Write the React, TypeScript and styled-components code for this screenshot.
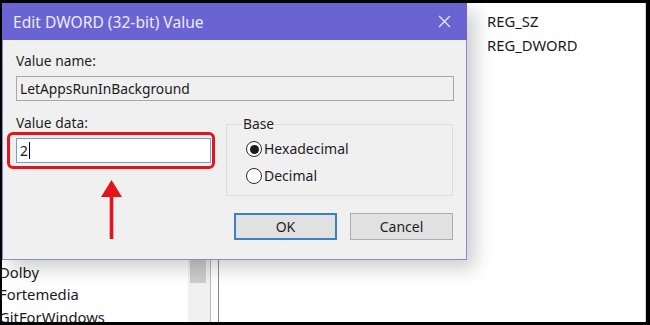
import React from 'react'
import styled, { createGlobalStyle } from 'styled-components'

const GlobalStyle = createGlobalStyle`
  html, body {
    margin: 0;
    padding: 0;
    background: #000;
  }
  * {
    box-sizing: border-box;
  }
`

const Frame = styled.div`
  position: relative;
  width: 650px;
  height: 325px;
  padding: 3px 4px 3px 2px;
  background: #000;
  font-family: 'Noto Sans', 'Open Sans', sans-serif;
  color: #1a1a1a;
  overflow: hidden;
`

const Regedit = styled.div`
  display: flex;
  height: 100%;
  background: #fff;
`

const TreePane = styled.div`
  display: flex;
  width: 206px;
`

const TreeList = styled.div`
  flex: 1;
  display: flex;
  flex-direction: column;
  justify-content: flex-end;
  margin-left: -3px;
  overflow: hidden;
  & > :last-child {
    margin-bottom: -6px;
  }
`

const TreeItem = styled.div`
  font-size: 14.8px;
  line-height: 22.5px;
  white-space: nowrap;
  height: 22.5px;
`

const Scrollbar = styled.div`
  width: 20px;
  background: #f0f0f0;
  display: flex;
  flex-direction: column;
`

const Thumb = styled.div`
  height: 280px;
  margin: 0 2px;
  background: #cdcdcd;
`

const Splitter = styled.div`
  width: 11px;
  background: #fff;
  border-left: 2px solid #f0f0f0;
  display: flex;
  justify-content: space-between;
  &::before,
  &::after {
    content: '';
    width: 1px;
    background: #b8b8b8;
  }
  &::after {
    background: #8a8a8a;
  }
`

const ValuesPane = styled.div`
  flex: 1;
  padding-top: 6px;
  padding-left: 268px;
  border-right: 1px solid #d4d4d4;
`

const TypeCell = styled.div`
  font-size: 14.8px;
  line-height: 24px;
  white-space: nowrap;
`

const Dialog = styled.div`
  position: absolute;
  left: 2px;
  top: 3px;
  width: 465px;
  height: 257px;
  display: flex;
  flex-direction: column;
  border: 1px solid #8d88d6;
  border-top: none;
  background: #f0f0f0;
  box-shadow: 8px 8px 18px rgba(0, 0, 0, 0.2);
`

const TitleBar = styled.div`
  height: 37px;
  display: flex;
  align-items: center;
  justify-content: space-between;
  padding: 0 16px 0 11px;
  margin: 0 -1px;
  background: #6a64d3;
  color: #ecebfa;
  font-size: 15.6px;
`

const Body = styled.div`
  flex: 1;
  display: flex;
  flex-direction: column;
  padding: 12px 12px 0 13px;
`

const Label = styled.div`
  font-size: 13.8px;
  line-height: 18px;
  color: #1e1e1e;
`

const TextBox = styled.div<{ $focused?: boolean }>`
  height: 25px;
  margin-top: 6px;
  padding: 0 3px;
  display: flex;
  align-items: center;
  font-size: 13.8px;
  border: 1px solid ${(p) => (p.$focused ? '#6f9fd4' : '#a8a8a8')};
  background: ${(p) => (p.$focused ? '#fff' : '#f0f0f0')};
`

const Caret = styled.span`
  display: inline-block;
  width: 1px;
  height: 17px;
  margin-left: 1px;
  background: #000;
`

const DataRow = styled.div`
  display: flex;
  margin-top: 13px;
`

const DataColumn = styled.div`
  width: 195px;
`

const GroupBox = styled.fieldset`
  margin: 3px 0 0 15px;
  width: 227px;
  height: 79px;
  padding: 8px 0 0 19px;
  border: 1px solid #dcdcdc;
  border-radius: 2px;
  display: flex;
  flex-direction: column;
  gap: 7px;
`

const Legend = styled.legend`
  font-size: 13.8px;
  padding: 0 1px;
  margin-left: -4px;
  line-height: 14px;
  color: #1e1e1e;
`

const Radio = styled.div`
  display: flex;
  align-items: center;
  font-size: 14px;
  line-height: 20px;
  color: #1e1e1e;
`

const RadioDot = styled.span<{ $checked?: boolean }>`
  width: 16px;
  height: 16px;
  margin-right: 2px;
  border-radius: 50%;
  border: 1px solid #2a2a2a;
  background: #fff;
  display: flex;
  align-items: center;
  justify-content: center;
  &::after {
    content: '';
    width: 9px;
    height: 9px;
    border-radius: 50%;
    background: ${(p) => (p.$checked ? '#1a1a1a' : 'transparent')};
  }
`

const ButtonRow = styled.div`
  display: flex;
  justify-content: flex-end;
  gap: 13px;
  margin-top: 17px;
  padding-right: 1px;
`

const Button = styled.div<{ $default?: boolean }>`
  width: 103px;
  height: 27px;
  display: flex;
  align-items: center;
  justify-content: center;
  font-size: 14px;
  color: #1e1e1e;
  background: #e1e1e1;
  border: ${(p) => (p.$default ? '2px solid #3c81c4' : '1px solid #adadad')};
`

const Highlight = styled.div`
  position: absolute;
  left: 7px;
  top: 132px;
  width: 208px;
  height: 37px;
  border: 3px solid #e3141b;
  border-radius: 6px;
`

const Arrow = styled.svg`
  position: absolute;
  left: 101px;
  top: 180px;
`

const Close = () => (
  <svg width="13" height="13" viewBox="0 0 13 13">
    <path d="M1 1L12 12M12 1L1 12" stroke="#ecebfa" strokeWidth="1.3" />
  </svg>
)

export default function App() {
  return (
    <>
      <GlobalStyle />
      <Frame>
        <Regedit>
          <TreePane>
            <TreeList>
              <TreeItem>Dolby</TreeItem>
              <TreeItem>Fortemedia</TreeItem>
              <TreeItem>GitForWindows</TreeItem>
            </TreeList>
            <Scrollbar>
              <Thumb />
            </Scrollbar>
          </TreePane>
          <Splitter />
          <ValuesPane>
            <TypeCell>REG_SZ</TypeCell>
            <TypeCell>REG_DWORD</TypeCell>
          </ValuesPane>
        </Regedit>

        <Dialog>
          <TitleBar>
            <span>Edit DWORD (32-bit) Value</span>
            <Close />
          </TitleBar>
          <Body>
            <Label>Value name:</Label>
            <TextBox>LetAppsRunInBackground</TextBox>
            <DataRow>
              <DataColumn>
                <Label>Value data:</Label>
                <TextBox $focused>
                  2<Caret />
                </TextBox>
              </DataColumn>
              <GroupBox>
                <Legend>Base</Legend>
                <Radio>
                  <RadioDot $checked />
                  Hexadecimal
                </Radio>
                <Radio>
                  <RadioDot />
                  Decimal
                </Radio>
              </GroupBox>
            </DataRow>
            <ButtonRow>
              <Button $default>OK</Button>
              <Button>Cancel</Button>
            </ButtonRow>
          </Body>
        </Dialog>

        <Highlight />
        <Arrow width="21" height="59" viewBox="0 0 21 59">
          <path d="M10.5 0L21 17H0Z" fill="#e3141b" />
          <rect x="8.7" y="16" width="3.6" height="43" fill="#e3141b" />
        </Arrow>
      </Frame>
    </>
  )
}
